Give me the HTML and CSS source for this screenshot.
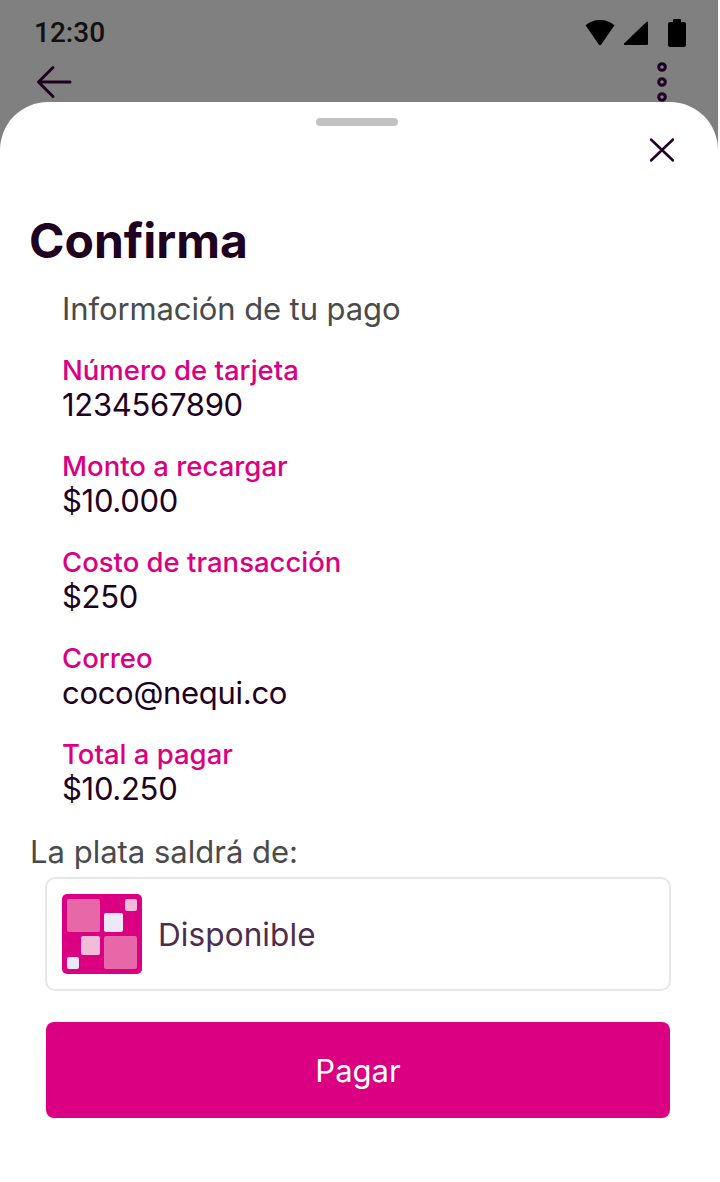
FILE: index.html
```html
<!DOCTYPE html>
<html lang="es">
<head>
<meta charset="utf-8">
<title>Confirma</title>
<link rel="stylesheet" href="styles.css">
</head>
<body>
<div class="screen">
  <header class="backdrop">
    <div class="status">
      <span class="time">12:30</span>
      <div class="status-icons">
        <svg class="ic-wifi" viewBox="0 0 32 32"><path d="M16 3C10 3 5.500 5 1.500 8.300L14.800 27.500a1.500 1.500 0 0 0 2.400 0L30.500 8.300C26.500 5 22 3 16 3z"/></svg>
        <svg class="ic-signal" viewBox="0 0 26 26"><path d="M24 1.500a1 1 0 0 1 1 1V24a1 1 0 0 1-1 1H2a1 1 0 0 1-.8-1.700z"/></svg>
        <svg class="ic-battery" viewBox="0 0 18 28"><path d="M6 0h6a1 1 0 0 1 1 1v2h3a2 2 0 0 1 2 2v21a2 2 0 0 1-2 2H2a2 2 0 0 1-2-2V5a2 2 0 0 1 2-2h3V1a1 1 0 0 1 1-1z"/></svg>
      </div>
    </div>
    <div class="toolbar">
      <svg class="ic-back" viewBox="0 0 36 36"><path d="M34 18H3M17 3.500 2.500 18 17 32.500"/></svg>
      <svg class="ic-more" viewBox="0 0 12 42"><circle cx="6" cy="6" r="3.300"/><circle cx="6" cy="21" r="3.300"/><circle cx="6" cy="36" r="3.300"/></svg>
    </div>
  </header>
  <main class="sheet">
    <div class="handle"></div>
    <div class="close-row">
      <svg class="ic-close" viewBox="0 0 24 24"><path d="M1 1.500 23 22.500M23 1.500 1 22.500"/></svg>
    </div>
    <h1 class="title">Confirma</h1>
    <section class="info">
      <h2 class="subtitle">Información de tu pago</h2>
      <dl class="fields">
        <div class="field"><dt>Número de tarjeta</dt><dd>1234567890</dd></div>
        <div class="field"><dt>Monto a recargar</dt><dd>$10.000</dd></div>
        <div class="field"><dt>Costo de transacción</dt><dd>$250</dd></div>
        <div class="field"><dt>Correo</dt><dd>coco@nequi.co</dd></div>
        <div class="field"><dt>Total a pagar</dt><dd>$10.250</dd></div>
      </dl>
    </section>
    <p class="source-label">La plata saldrá de:</p>
    <div class="source">
      <svg class="ic-pocket" viewBox="0 0 80 80">
        <rect width="80" height="80" rx="5" fill="#da0081"/>
        <rect x="5" y="5" width="33" height="33" rx="2" fill="#e668a8"/>
        <rect x="42" y="19" width="19" height="19" rx="2" fill="#ece8f5"/>
        <rect x="63" y="5" width="12" height="12" rx="2" fill="#f2bcd9"/>
        <rect x="19" y="42" width="19" height="19" rx="2" fill="#f2bcd9"/>
        <rect x="42" y="42" width="33" height="33" rx="2" fill="#e668a8"/>
        <rect x="5" y="63" width="12" height="12" rx="2" fill="#ece8f5"/>
      </svg>
      <span class="source-name">Disponible</span>
    </div>
    <button class="pay" type="button">Pagar</button>
  </main>
</div>
</body>
</html>
```
FILE: styles.css
```css
* { box-sizing: border-box; }
html, body { margin: 0; padding: 0; background: #fff; }
body { font-family: "Inter", "Noto Sans", sans-serif; color: #200020; }
.screen { width: 718px; height: 1182px; background: #808080; overflow: hidden; }
.backdrop { height: 102px; padding-left: 34px; }
.status { display: flex; justify-content: space-between; align-items: center; height: 64px; padding: 1px 32px 0 0; }
.time { font-family: "Roboto", sans-serif; font-weight: 500; font-size: 28px; color: #111; }
.status-icons { display: flex; align-items: center; gap: 7px; }
.status-icons svg { display: block; fill: #000; }
.ic-wifi { width: 32px; height: 32px; }
.ic-signal { width: 26px; height: 26px; }
.ic-battery { width: 18px; height: 28px; margin-left: 12px; }
.toolbar { display: flex; justify-content: space-between; align-items: flex-start; padding: 0 50px 0 2px; }
.ic-back { width: 36px; height: 36px; fill: none; stroke: #200020; stroke-width: 3; stroke-linecap: round; stroke-linejoin: round; }
.ic-more { width: 12px; height: 42px; fill: none; stroke: #200020; stroke-width: 3; margin-top: -3px; }
.sheet { position: relative; height: 1080px; background: #fff; border-radius: 48px 48px 0 0; padding-top: 16px; }
.handle { width: 82px; height: 8px; border-radius: 4px; background: #c2c2c2; margin-left: 316px; }
.close-row { display: flex; justify-content: flex-end; padding: 12px 44px 0 0; }
.ic-close { width: 24px; height: 24px; fill: none; stroke: #200020; stroke-width: 2.500; stroke-linecap: round; display: block; }
.title { margin: 47px 0 0 29px; font-size: 48px; line-height: 64px; font-weight: 700; color: #200020; }
.info { padding-left: 62px; }
.subtitle { margin: 0; padding-top: 16px; font-size: 31px; line-height: 40px; font-weight: 400; color: #4a4a4a; letter-spacing: -.1px; }
.fields { margin: 24px 0 0; display: flex; flex-direction: column; gap: 26px; }
.field dt { font-size: 27.500px; line-height: 34px; font-weight: 450; color: #da0081; }
.field dd { margin: 0; font-size: 31px; line-height: 36px; font-weight: 400; color: #200020; letter-spacing: -.3px; }
.source-label { margin: 25px 0 0 30px; font-size: 31px; line-height: 40px; color: #4a4a4a; }
.source { display: flex; align-items: center; gap: 16px; width: 626px; height: 114px; margin: 5px 0 0 45px; padding: 0 15px; border: 2px solid #e6e6e6; border-radius: 10px; }
.ic-pocket { width: 80px; height: 80px; display: block; }
.source-name { font-size: 31.500px; color: #4d2c4d; letter-spacing: .1px; }
.pay { display: block; width: 624px; height: 96px; margin: 31px 0 0 46px; border: 0; border-radius: 8px; background: #da0081; color: #fff; font: 400 31px "Inter", sans-serif; }
```
